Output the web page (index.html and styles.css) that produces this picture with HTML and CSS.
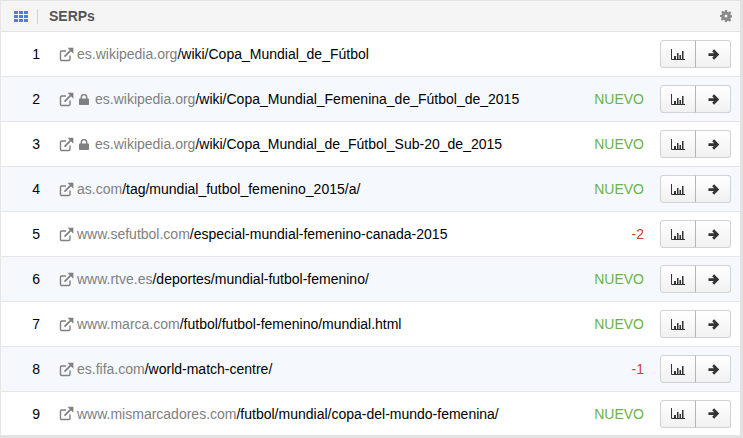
FILE: index.html
```html
<!DOCTYPE html>
<html lang="es">
<head>
<meta charset="UTF-8">
<meta name="viewport" content="width=device-width, initial-scale=1.0">
<title>SERPs</title>
<link rel="stylesheet" href="styles.css">
</head>
<body>
<svg class="defs" width="0" height="0">
  <symbol id="ext" viewBox="0 0 15 15">
    <path d="M11 8.5V12.3a1.2 1.2 0 0 1-1.2 1.2H2.7a1.2 1.2 0 0 1-1.2-1.2V5.2A1.2 1.2 0 0 1 2.7 4H7" fill="none" stroke="currentColor" stroke-width="1.4"/>
    <path d="M5.5 9.7 12 3.2" fill="none" stroke="currentColor" stroke-width="1.8"/>
    <path d="M8.5 .8H14.4V6.7Z" fill="currentColor"/>
  </symbol>
  <symbol id="lock" viewBox="0 0 10 11">
    <path d="M2.3 5V3.3a2.7 2.7 0 0 1 5.4 0V5" fill="none" stroke="currentColor" stroke-width="1.5"/>
    <rect y="4.6" width="10" height="6.4" rx=".8" fill="currentColor"/>
  </symbol>
  <symbol id="chart" viewBox="0 0 14 11">
    <path d="M.5 0V10.5H14" fill="none" stroke="currentColor"/>
    <path d="M3 7h2v3H3zM6 4h1.5v6H6zM8.5 6H10v4H8.5zM11 2h1.5v8H11z" fill="currentColor"/>
  </symbol>
  <symbol id="arrow" viewBox="0 0 12 12">
    <path d="M.5 6H9.5M5.6 1.4 10.2 6 5.6 10.6" fill="none" stroke="currentColor" stroke-width="3"/>
  </symbol>
</svg>

<div class="panel">
  <div class="panel-head">
    <svg class="grid-icon" width="14" height="11" viewBox="0 0 14 11">
      <path d="M0 0h4v3H0zM5 0h4v3H5zM10 0h4v3h-4zM0 4h4v3H0zM5 4h4v3H5zM10 4h4v3h-4zM0 8h4v3H0zM5 8h4v3H5zM10 8h4v3h-4z"/>
    </svg>
    <span class="sep"></span>
    <h1>SERPs</h1>
    <svg class="gear" width="12" height="12" viewBox="0 0 24 24">
      <path d="M10 0h4l.6 3.4 2.2.9 2.8-2 2.9 2.9-2 2.8.9 2.2 3.4.6v4l-3.4.6-.9 2.2 2 2.8-2.9 2.9-2.8-2-2.2.9L14 24h-4l-.6-3.4-2.2-.9-2.8 2-2.9-2.9 2-2.8-.9-2.2L0 14v-4l3.4-.6.9-2.2-2-2.8 2.9-2.9 2.8 2 2.2-.9zM12 9a3 3 0 1 0 0 6 3 3 0 0 0 0-6z" fill-rule="evenodd"/>
    </svg>
  </div>

  <div class="row">
    <span class="pos">1</span>
    <svg class="i-ext"><use href="#ext"/></svg>
    <span class="url"><span class="host">es.wikipedia.org</span>/wiki/Copa_Mundial_de_Fútbol</span>
    <span class="change"></span>
    <div class="btns"><button><svg class="i-chart"><use href="#chart"/></svg></button><button><svg class="i-arrow"><use href="#arrow"/></svg></button></div>
  </div>
  <div class="row alt">
    <span class="pos">2</span>
    <svg class="i-ext"><use href="#ext"/></svg>
    <svg class="i-lock"><use href="#lock"/></svg>
    <span class="url"><span class="host">es.wikipedia.org</span>/wiki/Copa_Mundial_Femenina_de_Fútbol_de_2015</span>
    <span class="change new">NUEVO</span>
    <div class="btns"><button><svg class="i-chart"><use href="#chart"/></svg></button><button><svg class="i-arrow"><use href="#arrow"/></svg></button></div>
  </div>
  <div class="row">
    <span class="pos">3</span>
    <svg class="i-ext"><use href="#ext"/></svg>
    <svg class="i-lock"><use href="#lock"/></svg>
    <span class="url"><span class="host">es.wikipedia.org</span>/wiki/Copa_Mundial_de_Fútbol_Sub-20_de_2015</span>
    <span class="change new">NUEVO</span>
    <div class="btns"><button><svg class="i-chart"><use href="#chart"/></svg></button><button><svg class="i-arrow"><use href="#arrow"/></svg></button></div>
  </div>
  <div class="row alt">
    <span class="pos">4</span>
    <svg class="i-ext"><use href="#ext"/></svg>
    <span class="url"><span class="host">as.com</span>/tag/mundial_futbol_femenino_2015/a/</span>
    <span class="change new">NUEVO</span>
    <div class="btns"><button><svg class="i-chart"><use href="#chart"/></svg></button><button><svg class="i-arrow"><use href="#arrow"/></svg></button></div>
  </div>
  <div class="row">
    <span class="pos">5</span>
    <svg class="i-ext"><use href="#ext"/></svg>
    <span class="url"><span class="host">www.sefutbol.com</span>/especial-mundial-femenino-canada-2015</span>
    <span class="change down">-2</span>
    <div class="btns"><button><svg class="i-chart"><use href="#chart"/></svg></button><button><svg class="i-arrow"><use href="#arrow"/></svg></button></div>
  </div>
  <div class="row alt">
    <span class="pos">6</span>
    <svg class="i-ext"><use href="#ext"/></svg>
    <span class="url"><span class="host">www.rtve.es</span>/deportes/mundial-futbol-femenino/</span>
    <span class="change new">NUEVO</span>
    <div class="btns"><button><svg class="i-chart"><use href="#chart"/></svg></button><button><svg class="i-arrow"><use href="#arrow"/></svg></button></div>
  </div>
  <div class="row">
    <span class="pos">7</span>
    <svg class="i-ext"><use href="#ext"/></svg>
    <span class="url"><span class="host">www.marca.com</span>/futbol/futbol-femenino/mundial.html</span>
    <span class="change new">NUEVO</span>
    <div class="btns"><button><svg class="i-chart"><use href="#chart"/></svg></button><button><svg class="i-arrow"><use href="#arrow"/></svg></button></div>
  </div>
  <div class="row alt">
    <span class="pos">8</span>
    <svg class="i-ext"><use href="#ext"/></svg>
    <span class="url"><span class="host">es.fifa.com</span>/world-match-centre/</span>
    <span class="change down">-1</span>
    <div class="btns"><button><svg class="i-chart"><use href="#chart"/></svg></button><button><svg class="i-arrow"><use href="#arrow"/></svg></button></div>
  </div>
  <div class="row">
    <span class="pos">9</span>
    <svg class="i-ext"><use href="#ext"/></svg>
    <span class="url"><span class="host">www.mismarcadores.com</span>/futbol/mundial/copa-del-mundo-femenina/</span>
    <span class="change new">NUEVO</span>
    <div class="btns"><button><svg class="i-chart"><use href="#chart"/></svg></button><button><svg class="i-arrow"><use href="#arrow"/></svg></button></div>
  </div>
</div>
</body>
</html>
```
FILE: styles.css
```css
html, body {
  height: 100%;
}
body {
  font-family: "Liberation Sans", Arial, sans-serif;
  font-size: 14px;
  background-color: #e2e2e2;
  margin: 0;
  padding: 1px 3px 0 0;
  box-sizing: border-box;
  overflow: hidden;
}
.defs {
  position: absolute;
}
.panel {
  background-color: #fff;
  border-left: 1px solid #e6e6e6;
}
.panel-head {
  display: flex;
  align-items: center;
  height: 30px;
  background-color: #f5f5f5;
  border-bottom: 1px solid #e2e2e2;
  padding: 0 8px 0 13px;
}
.grid-icon {
  fill: #4f7fd6;
}
.sep {
  width: 1px;
  height: 15px;
  background-color: #d0d0d0;
  margin: 0 11px 0 9px;
}
h1 {
  font-size: 14px;
  font-weight: bold;
  color: #555;
  margin: 0;
  flex: 1;
}
.gear {
  fill: #8a8a8a;
}
.row {
  display: flex;
  align-items: center;
  height: 44px;
  border-bottom: 1px solid #e6e6e6;
  padding-right: 9px;
  color: #000;
}
.row:last-child {
  height: 43px;
}
.alt {
  background-color: #f5f9fd;
}
.pos {
  width: 39px;
  margin-right: 19px;
  text-align: right;
}
.i-ext {
  width: 15px;
  height: 15px;
  color: #808080;
  margin-right: 3px;
}
.i-lock {
  width: 10px;
  height: 11px;
  color: #808080;
  margin: 0 6px 0 2px;
}
.url {
  flex: 1;
  white-space: nowrap;
}
.host {
  color: #808080;
}
.change {
  margin-right: 16px;
}
.new {
  color: #6cb244;
}
.down {
  color: #c9431f;
}
.btns {
  display: flex;
}
button {
  display: flex;
  align-items: center;
  justify-content: center;
  width: 36px;
  height: 28px;
  padding: 0;
  border: 1px solid #d2d2d2;
  border-radius: 3px 0 0 3px;
  background: linear-gradient(#fff, #f1f1f1);
  color: #333;
}
button + button {
  margin-left: -1px;
  border-radius: 0 3px 3px 0;
  border-left-color: #b5b5b5;
}
.i-chart {
  width: 14px;
  height: 11px;
}
.i-arrow {
  width: 11px;
  height: 11px;
}
```
